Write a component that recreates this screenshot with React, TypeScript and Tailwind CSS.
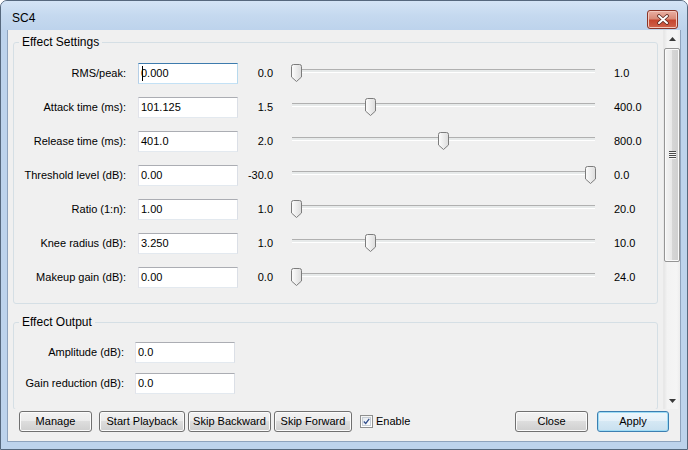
import React from "react";

type Row = { label: string; value: string; min: string; max: string; frac: number; focused?: boolean };

const rows: Row[] = [
  { label: "RMS/peak:", value: "0.000", min: "0.0", max: "1.0", frac: 0, focused: true },
  { label: "Attack time (ms):", value: "101.125", min: "1.5", max: "400.0", frac: 0.25 },
  { label: "Release time (ms):", value: "401.0", min: "2.0", max: "800.0", frac: 0.5 },
  { label: "Threshold level (dB):", value: "0.00", min: "-30.0", max: "0.0", frac: 1 },
  { label: "Ratio (1:n):", value: "1.00", min: "1.0", max: "20.0", frac: 0 },
  { label: "Knee radius (dB):", value: "3.250", min: "1.0", max: "10.0", frac: 0.25 },
  { label: "Makeup gain (dB):", value: "0.00", min: "0.0", max: "24.0", frac: 0 },
];

function TextBox({ value, focused, caret }: { value: string; focused?: boolean; caret?: boolean }) {
  return (
    <div
      className={
        focused
          ? "relative h-[21px] w-[100px] bg-white border border-t-[#3d7bad] border-l-[#b5cfe7] border-r-[#b7d9ed] border-b-[#c3e1f5] flex items-center pl-[2px] text-[11px] text-black"
          : "relative h-[21px] w-[100px] bg-white border border-t-[#abadb3] border-l-[#e2e3ea] border-r-[#dbdfe6] border-b-[#e3e9ef] flex items-center pl-[2px] text-[11px] text-black"
      }
    >
      {caret && <div className="absolute left-[3px] top-[2px] h-[15px] w-[1px] bg-black" />}
      <span>{value}</span>
    </div>
  );
}

function Thumb() {
  return (
    <svg width="11" height="18" viewBox="0 0 11 18">
      <defs>
        <linearGradient id="tg" x1="0" y1="0" x2="1" y2="0">
          <stop offset="0" stopColor="#fdfdfd" />
          <stop offset="1" stopColor="#dcdcdc" />
        </linearGradient>
      </defs>
      <path
        d="M0.5 2.5 Q0.5 0.5 2.5 0.5 H8.5 Q10.5 0.5 10.5 2.5 V13 L5.5 17.5 L0.5 13 Z"
        fill="url(#tg)"
        stroke="#7c7c7c"
      />
    </svg>
  );
}

function Slider({ frac }: { frac: number }) {
  const left = Math.round(frac * 294);
  return (
    <div className="relative h-[20px] w-[305px] ml-[18px]">
      <div className="absolute left-[1px] right-[1px] top-[6px] h-[4px] border-t border-t-[#b0b0b0] border-b border-b-white bg-[#e7eaea]" />
      <div className="absolute top-[1px]" style={{ left }}>
        <Thumb />
      </div>
    </div>
  );
}

function Btn({ children, w, primary }: { children: React.ReactNode; w: string; primary?: boolean }) {
  return (
    <div
      className={
        (primary
          ? "border-[#3c7fb1] bg-[linear-gradient(to_bottom,#eef7fc_0%,#e3f0f8_50%,#d5e8f4_50%,#c8e0ef_100%)] shadow-[inset_0_0_0_1px_#9fdcf5] "
          : "border-[#707070] bg-[linear-gradient(to_bottom,#f2f2f2_0%,#ebebeb_50%,#dddddd_50%,#cfcfcf_100%)] shadow-[inset_0_0_0_1px_#fbfbfb] ") +
        "h-[21px] rounded-[3px] border flex items-center justify-center text-[11px] text-black " +
        w
      }
    >
      {children}
    </div>
  );
}

export default function App() {
  return (
    <div className="w-[688px] h-[450px] flex flex-col bg-[#bdd3ec] border border-[#56687d] rounded-t-[7px] overflow-hidden font-['Liberation_Sans',Arial,sans-serif] text-[11px] text-black select-none">
      {/* Title bar */}
      <div className="h-[29px] flex items-start bg-[linear-gradient(to_bottom,#d4e4f5_0%,#c5d9ef_50%,#bdd3ec_100%)]">
        <span className="ml-[11px] mt-[10px] text-[12px] leading-[14px] text-black">SC4</span>
        <div className="ml-auto mt-[9px] mr-[9px] w-[31px] h-[19px] rounded-[3px] border border-[#8b3527] bg-[linear-gradient(to_bottom,#eab0a3_0%,#d98b78_45%,#c5462f_55%,#d0634c_100%)] shadow-[inset_0_0_0_1px_#f3c8bd] flex items-center justify-center">
          <svg width="14" height="11" viewBox="0 0 14 11">
            <path d="M3 2 L11 9 M11 2 L3 9" stroke="#5c2a22" strokeWidth="3.6" strokeLinecap="round" />
            <path d="M3 2 L11 9 M11 2 L3 9" stroke="#ffffff" strokeWidth="2" strokeLinecap="round" />
          </svg>
        </div>
      </div>

      {/* Client area */}
      <div className="mx-[6px] mb-[7px] flex-1 flex flex-col bg-[#f0f0f0] border-x border-b border-[#8ea3bd]">
        <div className="h-[379px] flex">
          {/* scroll viewport */}
          <div className="flex-1 overflow-hidden pt-[4px] px-[5px]">
            <fieldset className="border border-[#d5dfe5] rounded-[3px] pt-[6px] pb-[9px] px-0">
              <legend className="ml-[5px] px-[3px] text-[12px] leading-[16px]">Effect Settings</legend>
              {rows.map((r) => (
                <div key={r.label} className="h-[34px] flex items-center">
                  <div className="w-[112px] text-right whitespace-nowrap">{r.label}</div>
                  <div className="ml-[12px]">
                    <TextBox value={r.value} focused={r.focused} caret={r.focused} />
                  </div>
                  <div className="w-[35px] text-right">{r.min}</div>
                  <Slider frac={r.frac} />
                  <div className="ml-[18px]">{r.max}</div>
                </div>
              ))}
            </fieldset>
            <fieldset className="mt-[10px] border border-[#d5dfe5] rounded-[3px] pt-[7px] pb-[10px] px-0">
              <legend className="ml-[5px] px-[3px] text-[12px] leading-[16px]">Effect Output</legend>
              <div className="h-[31px] flex items-center">
                <div className="w-[110px] text-right whitespace-nowrap">Amplitude (dB):</div>
                <div className="ml-[11px]">
                  <TextBox value="0.0" />
                </div>
              </div>
              <div className="h-[31px] flex items-center">
                <div className="w-[110px] text-right whitespace-nowrap">Gain reduction (dB):</div>
                <div className="ml-[11px]">
                  <TextBox value="0.0" />
                </div>
              </div>
            </fieldset>
          </div>

          {/* scrollbar */}
          <div className="w-[17px] flex flex-col bg-[linear-gradient(to_right,#e6e6e6_0%,#f3f3f3_20%,#f5f5f5_80%,#ededed_100%)] border-l border-[#e8e8e8]">
            <div className="h-[17px] flex items-center justify-center">
              <svg width="7" height="4" viewBox="0 0 7 4">
                <path d="M0 4 L3.5 0 L7 4 Z" fill="#3a3a3a" />
              </svg>
            </div>
            <div className="flex-1">
              <div className="mt-[1px] h-[214px] rounded-[2px] border border-[#959595] bg-[linear-gradient(to_right,#f4f4f4_0%,#e8e8e8_50%,#d6d6d6_51%,#cfcfcf_100%)] shadow-[inset_0_0_0_1px_#fafafa] flex items-center justify-center">
                <svg width="7" height="8" viewBox="0 0 7 8">
                  <path d="M0 0.5 H7 M0 2.5 H7 M0 4.5 H7 M0 6.5 H7" stroke="#4a4a4a" strokeWidth="1" />
                  <path d="M0 1.5 H7 M0 3.5 H7 M0 5.5 H7 M0 7.5 H7" stroke="#f7f7f7" strokeWidth="1" />
                </svg>
              </div>
            </div>
            <div className="h-[17px] flex items-center justify-center">
              <svg width="7" height="4" viewBox="0 0 7 4">
                <path d="M0 0 L7 0 L3.5 4 Z" fill="#3a3a3a" />
              </svg>
            </div>
          </div>
        </div>

        {/* button bar */}
        <div className="pt-[2px] pl-[11px] pr-[11px] flex items-start">
          <Btn w="w-[73px]">Manage</Btn>
          <div className="ml-[7px]">
            <Btn w="w-[86px]">Start Playback</Btn>
          </div>
          <div className="ml-[3px]">
            <Btn w="w-[83px]">Skip Backward</Btn>
          </div>
          <div className="ml-[3px]">
            <Btn w="w-[78px]">Skip Forward</Btn>
          </div>
          <div className="ml-[8px] h-[21px] flex items-center">
            <div className="w-[13px] h-[13px] border border-[#8e8f8f] bg-[linear-gradient(to_bottom,#f4f4f4,#ffffff)] flex items-center justify-center">
              <div className="w-[9px] h-[9px] border border-[#c6cdd5] bg-[linear-gradient(135deg,#e4e9ee,#fdfdfd)] flex items-center justify-center">
                <svg width="9" height="9" viewBox="0 0 9 9">
                  <path d="M1 4.5 L3.5 7 L8 1" stroke="#2f4c8a" strokeWidth="1.6" fill="none" />
                </svg>
              </div>
            </div>
            <span className="ml-[3px]">Enable</span>
          </div>
          <div className="ml-auto">
            <Btn w="w-[73px]">Close</Btn>
          </div>
          <div className="ml-[9px]">
            <Btn w="w-[72px]" primary>
              Apply
            </Btn>
          </div>
        </div>
      </div>
    </div>
  );
}
